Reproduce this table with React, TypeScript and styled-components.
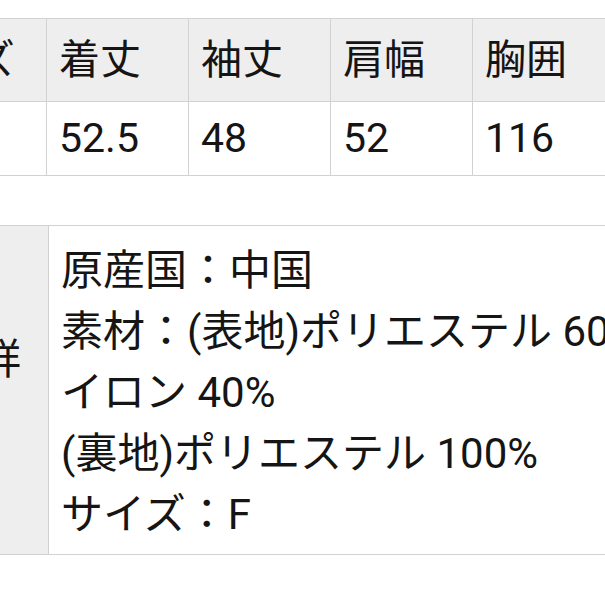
import React from 'react';
import styled, { createGlobalStyle } from 'styled-components';

const GlobalStyle = createGlobalStyle`
    html, body {
        margin: 0;
        padding: 0;
        background: #ffffff;
    }
    body {
        font-family: Roboto, "Noto Sans CJK JP", sans-serif;
        color: #151515;
    }
`;

const Page = styled.div`
    width: 605px;
    height: 605px;
    overflow: hidden;
    padding-top: 18px;
    box-sizing: border-box;
    display: flex;
    flex-direction: column;
    align-items: flex-start;
    gap: 49px;
`;

const Table = styled.table<{ $w: number; $size: number }>`
    border-collapse: collapse;
    table-layout: fixed;
    width: ${p => p.$w}px;
    flex-shrink: 0;
    margin-left: -120px;
    font-size: ${p => p.$size}px;
    font-weight: normal;
    td, th {
        border: 1px solid #d2d2d2;
        text-align: left;
        font-weight: normal;
        white-space: nowrap;
        overflow: hidden;
    }
`;

const Col = styled.col<{ $w: number }>`
    width: ${p => p.$w}px;
`;

const HeadCell = styled.th`
    height: 83px;
    padding: 0 12px;
    box-sizing: border-box;
    background: #eeeeee;
    line-height: 1;
`;

const Cell = styled.td`
    height: 74px;
    padding: 0 12px;
    box-sizing: border-box;
    background: #ffffff;
    line-height: 1;
`;

const LabelCell = styled.th`
    padding: 0 8px 0 14px;
    box-sizing: border-box;
    background: #eeeeee;
    line-height: 61px;
    vertical-align: middle;
`;

const DetailCell = styled.td`
    padding: 14px 12px 9px 12px;
    line-height: 61px;
    background: #ffffff;
    vertical-align: top;
`;

const sizes = [
    { label: '着丈', value: '52.5' },
    { label: '袖丈', value: '48' },
    { label: '肩幅', value: '52' },
    { label: '胸囲', value: '116' },
];

const details = [
    '原産国：中国',
    '素材：(表地)ポリエステル 60%ナ',
    'イロン 40%',
    '(裏地)ポリエステル 100%',
    'サイズ：F',
];

const App = () => {
    return (
        <>
            <GlobalStyle />
            <Page>
                <Table $w={166 + 142 * 4} $size={41}>
                    <colgroup>
                        <Col $w={166} />
                        {sizes.map(s => (
                            <Col key={s.label} $w={142} />
                        ))}
                    </colgroup>
                    <thead>
                        <tr>
                            <HeadCell>サイズ</HeadCell>
                            {sizes.map(s => (
                                <HeadCell key={s.label}>{s.label}</HeadCell>
                            ))}
                        </tr>
                    </thead>
                    <tbody>
                        <tr>
                            <Cell>F</Cell>
                            {sizes.map(s => (
                                <Cell key={s.label}>{s.value}</Cell>
                            ))}
                        </tr>
                    </tbody>
                </Table>
                <Table $w={168 + 700} $size={42}>
                    <colgroup>
                        <Col $w={168} />
                        <Col $w={700} />
                    </colgroup>
                    <tbody>
                        <tr>
                            <LabelCell>
                                商品詳<br />細
                            </LabelCell>
                            <DetailCell>
                                {details.map((line, i) => (
                                    <React.Fragment key={i}>
                                        {line}
                                        {i < details.length - 1 && <br />}
                                    </React.Fragment>
                                ))}
                            </DetailCell>
                        </tr>
                    </tbody>
                </Table>
            </Page>
        </>
    );
};

export default App;
